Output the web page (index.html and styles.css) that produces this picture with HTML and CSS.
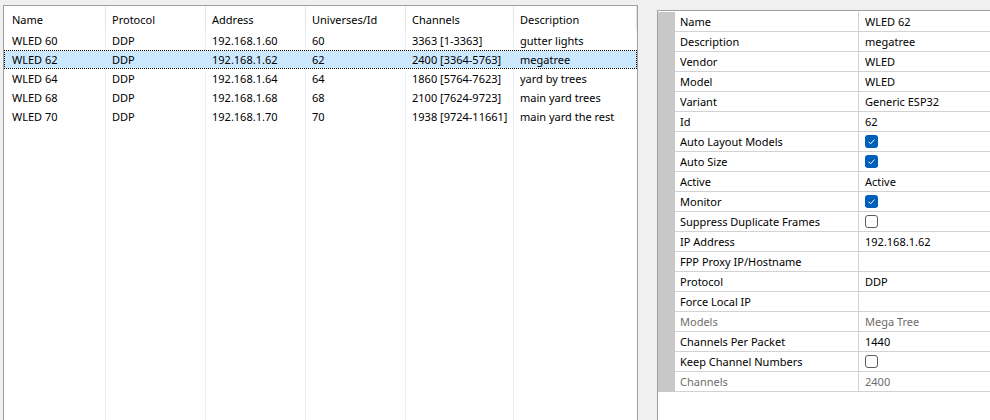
FILE: index.html
```html
<!DOCTYPE html>
<html>
<head>
<meta charset="utf-8">
<link rel="stylesheet" href="styles.css">
</head>
<body>
<div class="app">
  <div class="list">
    <div class="row head">
      <div class="c">Name</div><div class="c">Protocol</div><div class="c">Address</div><div class="c">Universes/Id</div><div class="c">Channels</div><div class="c">Description</div>
    </div>
    <div class="row">
      <div class="c">WLED 60</div><div class="c">DDP</div><div class="c">192.168.1.60</div><div class="c">60</div><div class="c">3363 [1-3363]</div><div class="c">gutter lights</div>
    </div>
    <div class="row sel">
      <div class="c">WLED 62</div><div class="c">DDP</div><div class="c">192.168.1.62</div><div class="c">62</div><div class="c">2400 [3364-5763]</div><div class="c">megatree</div>
    </div>
    <div class="row">
      <div class="c">WLED 64</div><div class="c">DDP</div><div class="c">192.168.1.64</div><div class="c">64</div><div class="c">1860 [5764-7623]</div><div class="c">yard by trees</div>
    </div>
    <div class="row">
      <div class="c">WLED 68</div><div class="c">DDP</div><div class="c">192.168.1.68</div><div class="c">68</div><div class="c">2100 [7624-9723]</div><div class="c">main yard trees</div>
    </div>
    <div class="row">
      <div class="c">WLED 70</div><div class="c">DDP</div><div class="c">192.168.1.70</div><div class="c">70</div><div class="c">1938 [9724-11661]</div><div class="c">main yard the rest</div>
    </div>
    <div class="row fill">
      <div class="c"></div><div class="c"></div><div class="c"></div><div class="c"></div><div class="c"></div><div class="c"></div>
    </div>
  </div>

  <div class="props">
    <div class="prow"><div class="gut"></div><div class="pn">Name</div><div class="pv">WLED 62</div></div>
    <div class="prow"><div class="gut"></div><div class="pn">Description</div><div class="pv">megatree</div></div>
    <div class="prow"><div class="gut"></div><div class="pn">Vendor</div><div class="pv">WLED</div></div>
    <div class="prow"><div class="gut"></div><div class="pn">Model</div><div class="pv">WLED</div></div>
    <div class="prow"><div class="gut"></div><div class="pn">Variant</div><div class="pv">Generic ESP32</div></div>
    <div class="prow"><div class="gut"></div><div class="pn">Id</div><div class="pv">62</div></div>
    <div class="prow"><div class="gut"></div><div class="pn">Auto Layout Models</div><div class="pv"><span class="cb on"><svg viewBox="0 0 13 13" width="13" height="13"><path d="M3.6 6.8 L5.6 8.8 L9.4 4.6" fill="none" stroke="#fff" stroke-width="1"/></svg></span></div></div>
    <div class="prow"><div class="gut"></div><div class="pn">Auto Size</div><div class="pv"><span class="cb on"><svg viewBox="0 0 13 13" width="13" height="13"><path d="M3.6 6.8 L5.6 8.8 L9.4 4.6" fill="none" stroke="#fff" stroke-width="1"/></svg></span></div></div>
    <div class="prow"><div class="gut"></div><div class="pn">Active</div><div class="pv">Active</div></div>
    <div class="prow"><div class="gut"></div><div class="pn">Monitor</div><div class="pv"><span class="cb on"><svg viewBox="0 0 13 13" width="13" height="13"><path d="M3.6 6.8 L5.6 8.8 L9.4 4.6" fill="none" stroke="#fff" stroke-width="1"/></svg></span></div></div>
    <div class="prow"><div class="gut"></div><div class="pn">Suppress Duplicate Frames</div><div class="pv"><span class="cb"></span></div></div>
    <div class="prow"><div class="gut"></div><div class="pn">IP Address</div><div class="pv">192.168.1.62</div></div>
    <div class="prow"><div class="gut"></div><div class="pn">FPP Proxy IP/Hostname</div><div class="pv"></div></div>
    <div class="prow"><div class="gut"></div><div class="pn">Protocol</div><div class="pv">DDP</div></div>
    <div class="prow"><div class="gut"></div><div class="pn">Force Local IP</div><div class="pv"></div></div>
    <div class="prow dis"><div class="gut"></div><div class="pn">Models</div><div class="pv">Mega Tree</div></div>
    <div class="prow"><div class="gut"></div><div class="pn">Channels Per Packet</div><div class="pv">1440</div></div>
    <div class="prow"><div class="gut"></div><div class="pn">Keep Channel Numbers</div><div class="pv"><span class="cb"></span></div></div>
    <div class="prow dis"><div class="gut"></div><div class="pn">Channels</div><div class="pv">2400</div></div>
  </div>
</div>
</body>
</html>
```

FILE: styles.css
```css
html, body {
  margin: 0;
  padding: 0;
  background: #f0f0f0;
  overflow: hidden;
}
body {
  font-family: "Noto Sans", "Liberation Sans", sans-serif;
  font-size: 11px;
  color: #000;
}
.app {
  display: flex;
  align-items: flex-start;
  height: 420px;
}
.list {
  margin: 5px 0 0 3px;
  width: 635px;
  height: 430px;
  box-sizing: border-box;
  border: 1px solid #a0a0a0;
  background: #fff;
  display: flex;
  flex-direction: column;
}
.row {
  display: grid;
  grid-template-columns: 102px 100px 100px 100px 108px 1fr;
  height: 19px;
}
.row .c {
  box-sizing: border-box;
  padding-left: 6px;
  line-height: 19px;
  white-space: nowrap;
  overflow: hidden;
  border-right: 1px solid #e6edf7;
}
.row .c:first-child {
  padding-left: 8px;
}
.row .c:last-child {
  border-right: none;
}
.row.head {
  height: 25px;
}
.row.head .c {
  line-height: 24px;
  border-right: 1px solid #e5e5e5;
  padding-top: 2px;
}
.row.head .c:first-child {
  padding-left: 8px;
}
.row.sel {
  padding: 1px 0;
  box-sizing: border-box;
  background: #cce8ff;
  background-clip: content-box;
  outline: 1px dotted #000;
  outline-offset: -1px;
}
.row.sel .c {
  border-right-color: transparent;
  line-height: 17px;
}
.row.fill {
  flex: 1;
  height: auto;
}

.props {
  margin: 10px 0 0 19px;
  padding-top: 1px;
  flex: 1;
  height: 420px;
  border-left: 1px solid #a0a0a0;
  border-top: 1px solid #a0a0a0;
  background: #fff;
}
.prow {
  display: grid;
  grid-template-columns: 17px 184px 1fr;
  height: 20px;
}
.gut {
  background: #c8c8c8;
}
.pn, .pv {
  box-sizing: border-box;
  border-bottom: 1px solid #d2d2d2;
  line-height: 19px;
  white-space: nowrap;
  padding-left: 5px;
  display: flex;
  align-items: center;
}
.pn {
  border-right: 1px solid #d2d2d2;
}
.pv {
  padding-left: 6px;
}
.prow.dis .pn, .prow.dis .pv {
  color: #6d6d6d;
}
.cb {
  display: inline-block;
  width: 13px;
  height: 13px;
  box-sizing: border-box;
  border: 1px solid #5c5c5c;
  border-radius: 3px;
  background: #fff;
}
.cb.on {
  border: none;
  background: #005fb8;
}
.cb svg {
  display: block;
}
```
